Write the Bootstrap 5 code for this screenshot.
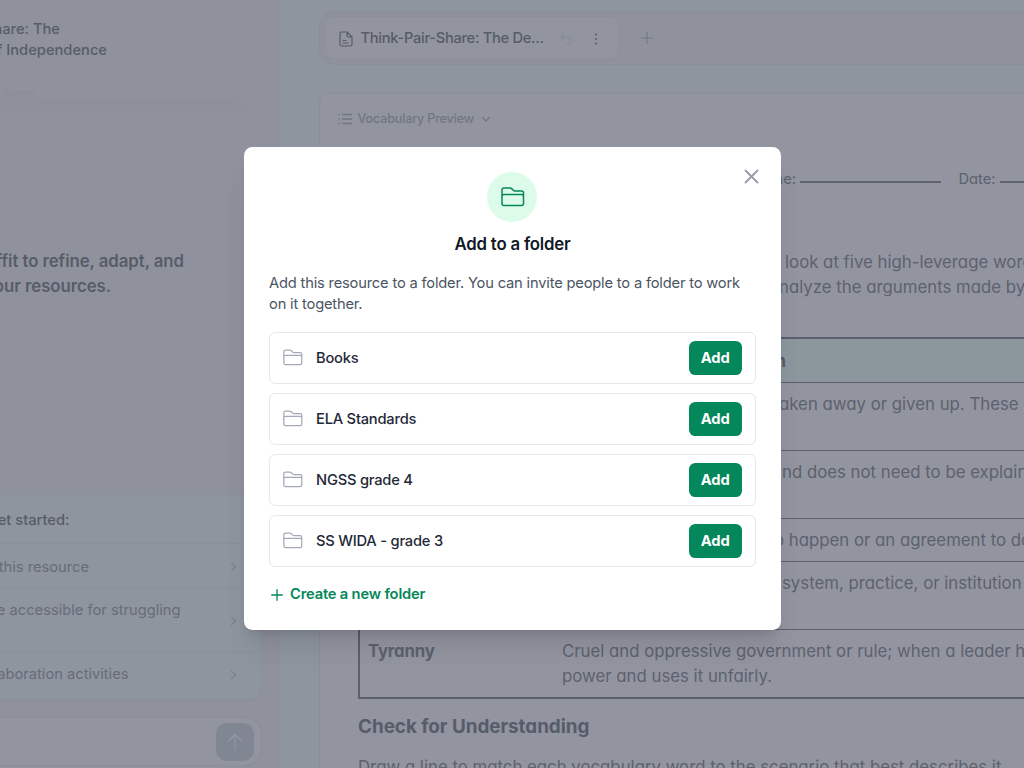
<!DOCTYPE html>
<html lang="en">
<head>
<meta charset="utf-8">
<meta name="viewport" content="width=device-width, initial-scale=1">
<title>Add to a folder</title>
<link href="https://cdn.jsdelivr.net/npm/bootstrap@5.3.0/dist/css/bootstrap.min.css" rel="stylesheet">
<style>
body{font-family:Inter,"Liberation Sans",sans-serif;font-size:14.7px;line-height:21px;color:#575c69;width:1024px;height:768px;overflow:hidden;background:#8e959f}
svg{display:block;fill:none;stroke:currentColor;stroke-linecap:round;stroke-linejoin:round;flex:none}
.page{width:1024px;height:768px;overflow:hidden}
.side{width:279px;background:#8f929d;border-right:1px solid #8a919c}
/* lines whose beginning is scrolled off to the left */
.clip{display:flex;justify-content:flex-end;white-space:nowrap;overflow:hidden;flex:none}
.side-head{height:98px;padding-top:19px;font-weight:500}
.faint{width:35px;height:12px;line-height:15px;font-size:13px;color:#8a8d99;margin-top:26px}
.fade-edge{height:15px;width:262px;background:linear-gradient(90deg,#8d909b 85%,#8f929d)}
.intro{padding-top:136px;height:381px;font-size:16.8px;line-height:25.2px;font-weight:600;letter-spacing:-.05px}
.suggest{width:262px;height:206px;background:#8e959f;border:1px solid #8a8f9b;border-left:0;border-radius:0 12px 12px 0;color:#686c79}
.suggest .line{border-bottom:1px solid #8a909c;padding:2px 22px 0 0}
.suggest .line:last-child{border-bottom:0}
.suggest svg{color:#6f7480}
.chat{width:262px;height:49px;margin-top:17px;background:#9295a0;border:1px solid #8a8e9a;border-left:0;border-radius:0 17px 17px 0;padding-right:7px}
.send{width:38px;height:38px;border-radius:11px;background:#808793;color:#9499a4}
.main{width:745px;padding:11px 0 0 40px}
.topbar{height:54px;width:720px;background:#8f929d;border:1px solid #8a8e99;border-radius:17px;padding-left:4px}
.tab-pill{width:296px;height:44px;background:#9295a0;border:1px solid #8b8f9a;border-radius:12px;padding:1px 14px 0 14px;font-weight:500;color:#565b67}
.paper{margin-top:28px;height:700px;width:720px;background:#9295a0;border:1px solid #8a8e99;border-radius:8px 0 0 0;padding-left:38px;white-space:nowrap}
.paper-tools{height:49px;margin-left:-20px;font-size:12.6px;letter-spacing:-.18px;font-weight:500;color:#717581}
.doc{font-size:16.8px;line-height:25.2px;font-feature-settings:"cv11";letter-spacing:0;color:#5d616e}
.meta{height:24px;margin-top:25px;font-size:14.7px;line-height:22px}
.rule{height:2px;background:#5f6370;display:inline-block;flex:none}
.lead-lines{height:87px;margin-top:58px}
.vocab{width:700px;height:362px;border:2px solid #5a5e6d}
.vocab .entry{border-top:1px solid #5c606e;padding-top:9px;height:68px}
.vocab .head{height:43px;background:#8b979c;padding-top:10px;color:#565b67}
.doc-title{font-size:18.9px;font-weight:700;margin-top:15px;height:41px;color:#565c69;letter-spacing:-.05px}
.scrim{position:absolute;left:244px;top:147px;width:537px;height:483px;border-radius:8.4px;background:#fff;box-shadow:0 21px 26px -5px rgba(0,0,0,.1),0 8px 10px -6px rgba(0,0,0,.12);padding:25px;color:#4b5563}
.x-btn{position:absolute;right:22px;top:22px;color:#959ba8}
.disc{width:50px;height:50px;border-radius:50%;background:#dcfbe8;color:#04875a;margin-left:218px}
.dlg-title{font-size:16.8px;line-height:25px;font-weight:600;color:#111827;margin:10px 0 16px;letter-spacing:-.2px}
.dlg-text{letter-spacing:-.18px}
.folder-row{height:52px;border:1px solid #e5e7eb;border-radius:6.3px;padding:0 13px;color:#1f2937;font-weight:450;letter-spacing:-.22px}
.folder-row svg{color:#a3a9b7;margin-bottom:1px}
.btn-add{width:53.5px;height:34px;border:0;border-radius:6.3px;background:#04875a;color:#fff;font:700 14.7px/21px Inter,sans-serif;letter-spacing:-.1px;padding:0}
.new-folder{color:#04875a;font-weight:600;margin-top:17px;letter-spacing:-.17px}
</style>
</head>
<body>
<div class="page d-flex position-relative">
  <aside class="side flex-shrink-0">
    <div class="side-head overflow-hidden">
      <div class="clip" style="width:60px">hare: The</div>
      <div class="clip" style="width:107px">f Independence</div>
      <div class="clip faint">s more</div>
    </div>
    <div class="fade-edge"></div>
    <div class="intro">
      <div class="clip" style="width:184px">ffit to refine, adapt, and</div>
      <div class="clip" style="width:111px">our resources.</div>
    </div>
    <div class="suggest d-flex flex-column">
      <div class="line d-flex align-items-center" style="height:49px;color:#565b68;font-weight:500"><div class="clip" style="width:69.5px">et started:</div></div>
      <div class="line d-flex align-items-center justify-content-between" style="height:45px"><div class="clip" style="width:89px">this resource</div><svg width="12" height="12" viewBox="0 0 12 12"><path d="M4.500 2l4 4-4 4"/></svg></div>
      <div class="line d-flex align-items-center justify-content-between" style="height:64px;padding-top:0"><div class="clip" style="width:180.5px;margin-bottom:20px">re accessible for struggling</div><svg width="12" height="12" viewBox="0 0 12 12"><path d="M4.500 2l4 4-4 4"/></svg></div>
      <div class="line d-flex align-items-center justify-content-between flex-fill pb-1" style="padding-top:1px"><div class="clip" style="width:128.5px">aboration activities</div><svg width="12" height="12" viewBox="0 0 12 12"><path d="M4.500 2l4 4-4 4"/></svg></div>
    </div>
    <div class="chat d-flex align-items-center justify-content-end">
      <div class="send d-flex align-items-center justify-content-center"><svg width="18" height="18" viewBox="0 0 18 18" stroke-width="1.100"><path d="M9 17V2M2.500 8L9 1.500 15.500 8"/></svg></div>
    </div>
  </aside>

  <main class="main flex-shrink-0">
    <div class="topbar d-flex align-items-center">
      <div class="tab-pill d-flex align-items-center">
        <svg width="14" height="16" viewBox="0 0 14 16" stroke-width="1.2"><path d="M8 1H2.500Q1 1 1 2.500V13.500Q1 15 2.500 15H11.500Q13 15 13 13.500V6L8 1V4.500Q8 6 9.500 6H13M4 9.500h3M4 12h5"/></svg>
        <span class="text-nowrap" style="margin-left:7.500px;width:184.500px;letter-spacing:-.3px">Think-Pair-Share: The De...</span>
        <svg style="margin-left:15px;color:#858b96" width="12" height="12" viewBox="0 0 12 12" stroke-width="1.1"><path d="M4 1L1 4l3 3M1 4h6.500a3.500 3.500 0 010 7H6"/></svg>
        <svg style="margin-left:21px" width="6" height="14" viewBox="0 0 6 14"><g fill="#5d626f" stroke="none"><circle cx="3" cy="2.500" r="1.100"/><circle cx="3" cy="7" r="1.100"/><circle cx="3" cy="11.500" r="1.100"/></g></svg>
      </div>
      <svg style="margin-left:21px;color:#717683" width="12" height="12" viewBox="0 0 12 12" stroke-width="1.100"><path d="M6 .5v11M.5 6h11"/></svg>
    </div>
    <div class="paper">
      <div class="paper-tools d-flex align-items-center">
        <svg width="14" height="12" viewBox="0 0 14 12" stroke-width="1.300"><path d="M4.500 1.500h9M4.500 6h9M4.500 10.500h9M.8 1.500h.4M.8 6h.4M.8 10.500h.4"/></svg>
        <span style="margin-left:5.500px">Vocabulary Preview</span>
        <svg style="margin-left:7px" width="10" height="8" viewBox="0 0 10 8" stroke-width="1.200"><path d="M1.500 2.500L5 6l3.500-3.500"/></svg>
      </div>
      <div class="doc">
        <div class="meta d-flex"><div class="clip" style="width:438px">ne:</div><span class="rule" style="width:141px;margin:13px 17.500px 0 4px"></span><span>Date:</span><span class="rule" style="width:60px;margin:13px 0 0 4px"></span></div>
        <div class="lead-lines">
          <div style="padding-left:427px">look at five high-leverage words</div>
          <div style="padding-left:421px">nalyze the arguments made by</div>
        </div>
        <div class="vocab">
          <div class="head fw-bold"><div class="clip" style="width:426px">n</div></div>
          <div class="entry"><div style="padding-left:419px">aken away or given up. These are</div></div>
          <div class="entry"><div style="padding-left:422px">nd does not need to be explained</div></div>
          <div class="entry" style="height:43px"><div style="padding-left:414px">o happen or an agreement to do</div></div>
          <div class="entry"><div style="padding-left:422px">system, practice, or institution</div></div>
          <div class="entry d-flex"><div class="fw-bold flex-shrink-0" style="width:202px;padding-left:8px;letter-spacing:-.2px">Tyranny</div><div>Cruel and oppressive government or rule; when a leader has<br>power and uses it unfairly.</div></div>
        </div>
        <div class="doc-title">Check for Understanding</div>
        <div>Draw a line to match each vocabulary word to the scenario that best describes it.</div>
      </div>
    </div>
  </main>

  <section class="scrim" role="dialog" aria-label="Add to a folder">
    <svg class="x-btn" width="15" height="15" viewBox="0 0 15 15" stroke-width="1.800"><path d="M1.500 1.500l12 12M13.500 1.500l-12 12"/></svg>
    <div class="disc d-flex align-items-center justify-content-center"><svg width="24" height="20" viewBox="0 0 24 20" stroke-width="1.500" style="margin-left:1px"><path d="M1 16.500V3Q1 1 3 1H9Q10 1 10.600 1.600L12 3Q13 4 14 4H20.500Q22.500 4 22.500 6V16.500Q22.500 18.500 20.500 18.500H3Q1 18.500 1 16.500ZM1 9.500Q1 7.500 3 7.500H20.500Q22.500 7.500 22.500 9.500"/></svg></div>
    <h1 class="dlg-title text-center">Add to a folder</h1>
    <p class="dlg-text mb-0 text-nowrap">Add this resource to a folder. You can invite people to a folder to work<br>on it together.</p>
    <div class="d-flex flex-column" style="gap:9px;margin-top:17px">
      <div class="folder-row d-flex align-items-center"><svg width="20" height="17" viewBox="0 0 24 20" stroke-width="1.500"><use href="#fld"/></svg><span class="flex-fill" style="margin-left:13px">Books</span><button class="btn-add">Add</button></div>
      <div class="folder-row d-flex align-items-center"><svg width="20" height="17" viewBox="0 0 24 20" stroke-width="1.500"><use href="#fld"/></svg><span class="flex-fill" style="margin-left:13px">ELA Standards</span><button class="btn-add">Add</button></div>
      <div class="folder-row d-flex align-items-center"><svg width="20" height="17" viewBox="0 0 24 20" stroke-width="1.500"><use href="#fld"/></svg><span class="flex-fill" style="margin-left:13px">NGSS grade 4</span><button class="btn-add">Add</button></div>
      <div class="folder-row d-flex align-items-center"><svg width="20" height="17" viewBox="0 0 24 20" stroke-width="1.500"><use href="#fld"/></svg><span class="flex-fill" style="margin-left:13px">SS WIDA - grade 3</span><button class="btn-add">Add</button></div>
    </div>
    <div class="new-folder d-flex align-items-center"><svg style="margin:0 7px 0 2px" width="12" height="12" viewBox="0 0 12 12" stroke-width="1.300"><path d="M6 .7v10.600M.7 6h10.600"/></svg>Create a new folder</div>
  </section>
  <svg width="0" height="0" style="position:absolute"><defs><path id="fld" d="M1 16.500V3Q1 1 3 1H8Q9 1 9.600 1.600L11 3Q12 4 13 4H20.500Q22.500 4 22.500 6V16.500Q22.500 18.500 20.500 18.500H3Q1 18.500 1 16.500ZM1 9.500Q1 7.500 3 7.500H20.500Q22.500 7.500 22.500 9.500"/></defs></svg>
</div>
<script src="https://cdn.jsdelivr.net/npm/bootstrap@5.3.0/dist/js/bootstrap.bundle.min.js"></script>
</body>
</html>
